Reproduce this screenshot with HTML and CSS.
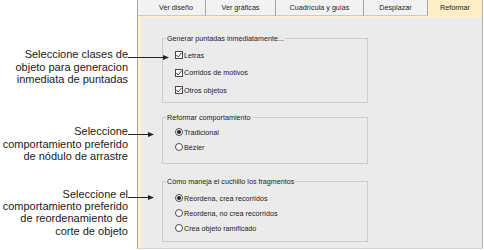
FILE: index.html
```html
<!DOCTYPE html>
<html lang="es">
<head>
<meta charset="utf-8">
<title>Reformar</title>
<link rel="stylesheet" href="styles.css">
</head>
<body>
<div class="page">
  <div class="notes">
    <p class="note note-1">Seleccione clases de<br>objeto para generacion<br>inmediata de puntadas<svg class="arrow arrow-long" width="42" height="7" viewBox="0 0 42 7"><line x1="0" y1="3.5" x2="36" y2="3.5"/><polygon points="35,1 41,3.5 35,6"/></svg></p>
    <p class="note note-2">Seleccione<br>comportamiento preferido<br>de nódulo de arrastre<svg class="arrow arrow-short" width="27" height="7" viewBox="0 0 27 7"><line x1="0" y1="3.5" x2="21" y2="3.5"/><polygon points="20,1 26,3.5 20,6"/></svg></p>
    <p class="note note-3">Seleccione el<br>comportamiento preferido<br>de reordenamiento de<br>corte de objeto<svg class="arrow arrow-short" width="27" height="7" viewBox="0 0 27 7"><line x1="0" y1="3.5" x2="21" y2="3.5"/><polygon points="20,1 26,3.5 20,6"/></svg></p>
  </div>
  <div class="dialog">
    <div class="tabs">
      <div class="tab tab-1">Ver diseño</div>
      <div class="tab tab-2">Ver gráficas</div>
      <div class="tab tab-3">Cuadrícula y guías</div>
      <div class="tab tab-4">Desplazar</div>
      <div class="tab tab-active">Reformar</div>
    </div>
    <div class="panel">
      <div class="group group-1">
        <div class="legend">Generar puntadas inmediatamente...</div>
        <div class="items">
          <div class="item"><span class="check"><svg width="8" height="8" viewBox="0 0 8 8"><polyline points="1.4,4 3.2,5.9 6.7,1.8"/></svg></span><span class="label">Letras</span></div>
          <div class="item"><span class="check"><svg width="8" height="8" viewBox="0 0 8 8"><polyline points="1.4,4 3.2,5.9 6.7,1.8"/></svg></span><span class="label">Corridos de motivos</span></div>
          <div class="item"><span class="check"><svg width="8" height="8" viewBox="0 0 8 8"><polyline points="1.4,4 3.2,5.9 6.7,1.8"/></svg></span><span class="label">Otros objetos</span></div>
        </div>
      </div>
      <div class="group group-2">
        <div class="legend">Reformar comportamiento</div>
        <div class="items">
          <div class="item"><span class="radio radio-on"></span><span class="label">Tradicional</span></div>
          <div class="item"><span class="radio"></span><span class="label">Bézier</span></div>
        </div>
      </div>
      <div class="group group-3">
        <div class="legend">Cómo maneja el cuchillo los fragmentos</div>
        <div class="items">
          <div class="item"><span class="radio radio-on"></span><span class="label">Reordena, crea recorridos</span></div>
          <div class="item"><span class="radio"></span><span class="label">Reordena, no crea recorridos</span></div>
          <div class="item"><span class="radio"></span><span class="label">Crea objeto ramificado</span></div>
        </div>
      </div>
    </div>
  </div>
</div>
</body>
</html>
```
FILE: styles.css
```css
* { box-sizing: border-box; }
html, body { margin: 0; padding: 0; background: #ffffff; }
body { width: 484px; height: 250px; overflow: hidden; font-family: "Liberation Sans", Arial, sans-serif; }

.page { display: flex; width: 484px; height: 250px; }

.notes { width: 137px; flex: none; padding-top: 48.4px; }
.note {
  position: relative;
  width: 128px;
  margin: 0;
  text-align: right;
  font-size: 11px;
  line-height: 12.3px;
  color: #1a1a1a;
  white-space: nowrap;
}
.note-2 { margin-top: 40px; }
.note-3 { margin-top: 25.6px; }
.arrow { position: absolute; left: 100%; overflow: visible; z-index: 2; }
.arrow line { stroke: #222; stroke-width: 1; }
.arrow polygon { fill: #222; }
.note-1 .arrow { top: 6.1px; }
.note-2 .arrow { top: 5.6px; }
.note-3 .arrow { top: 6.6px; }

.dialog {
  width: 346px;
  height: 249px;
  flex: none;
  display: flex;
  flex-direction: column;
  border-left: 1px solid #a8a8a8;
  border-right: 1px solid #b4b4b4;
  border-bottom: 1px solid #d4d4d4;
  background: #ebebeb;
}

.tabs { display: flex; height: 16px; flex: none; background: #f2f2f2; }
.tab {
  height: 16px;
  border-right: 1px solid #a6a6a6;
  border-bottom: 1px solid #c9c9c9;
  font-size: 7.2px;
  line-height: 16px;
  color: #222;
  text-align: center;
  white-space: nowrap;
}
.tab-1 { width: 68px; padding-left: 9px; }
.tab-2 { width: 70px; }
.tab-3 { width: 88px; }
.tab-4 { width: 64px; }
.tab-active { flex: 1; border-right: none; border-bottom: none; background: #fdeec5; }

.panel {
  flex: 1;
  border-left: 3px solid #fcf0cf;
  border-top: 2px solid #fcf0cf;
  padding-left: 21px;
  padding-top: 20px;
}

.group {
  width: 206px;
  border: 1px solid #cdcdcd;
  font-size: 7.2px;
  color: #222;
}
.group-2 { margin-top: 14px; padding-bottom: 8.5px; }
.group-3 { margin-top: 17px; padding-bottom: 5.5px; }
.group-1 { padding-bottom: 3.25px; }

.legend {
  display: table;
  margin: -5px 0 0 3px;
  padding: 0 1px;
  line-height: 9px;
  background: #ebebeb;
  white-space: nowrap;
}

.items { padding-left: 12px; }
.group-1 .items { margin-top: 3.25px; }
.group-2 .items { margin-top: 2.5px; }
.group-3 .items { margin-top: 4.5px; }

.item { display: flex; align-items: center; height: 15px; }
.group-1 .item { height: 17.5px; }
.label { margin-left: 1px; white-space: nowrap; }

.check {
  width: 8px;
  height: 8px;
  border: 1px solid #4a4a4a;
  background: #fff;
  display: flex;
  align-items: center;
  justify-content: center;
  position: relative;
}
.check svg { position: absolute; left: -1px; top: -1px; }
.check polyline { fill: none; stroke: #222; stroke-width: 0.9; }

.radio {
  width: 8px;
  height: 8px;
  border: 1px solid #4a4a4a;
  border-radius: 50%;
  background: #fff;
  display: flex;
  align-items: center;
  justify-content: center;
}
.radio-on::after {
  content: "";
  width: 4px;
  height: 4px;
  border-radius: 50%;
  background: #222;
}
```
